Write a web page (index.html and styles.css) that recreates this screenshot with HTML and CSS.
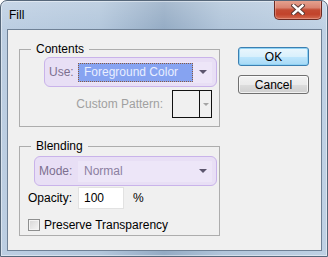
FILE: index.html
```html
<!doctype html>
<html lang="en">
<head>
	<meta charset="utf-8">
	<title>Fill</title>
	<link rel="stylesheet" href="styles.css">
</head>
<body>

	<div class="window">
		<div class="titlebar">
			<span class="title">Fill</span>
			<button class="close" aria-label="Close">
				<svg width="14" height="11" viewBox="0 0 14 11">
					<path d="M2.5 1.5 L11.5 9.5 M11.5 1.5 L2.5 9.5" stroke="#5b3a36" stroke-width="4.4" stroke-linecap="square" fill="none"/>
					<path d="M2.5 1.5 L11.5 9.5 M11.5 1.5 L2.5 9.5" stroke="#ffffff" stroke-width="2.4" stroke-linecap="square" fill="none"/>
				</svg>
			</button>
		</div>

		<div class="client">
			<div class="groups">
				<fieldset class="group group-contents">
					<legend>Contents</legend>
					<div class="hl hl-use">
						<span class="hl-label">Use:</span>
						<div class="select">
							<span class="select-value is-selected">Foreground Color</span>
							<span class="select-arrow"></span>
						</div>
					</div>
					<div class="pattern-row">
						<span class="disabled">Custom Pattern:</span>
						<div class="pattern-box">
							<span class="pattern-swatch"></span>
							<span class="pattern-arrow"></span>
						</div>
					</div>
				</fieldset>

				<fieldset class="group group-blending">
					<legend>Blending</legend>
					<div class="hl hl-mode">
						<span class="hl-label">Mode:</span>
						<div class="select">
							<span class="select-value">Normal</span>
							<span class="select-arrow"></span>
						</div>
					</div>
					<div class="opacity-row">
						<span class="row-label">Opacity:</span>
						<input class="field" type="text" value="100">
						<span class="unit">%</span>
					</div>
					<label class="check-row">
						<span class="checkbox"></span>
						<span>Preserve Transparency</span>
					</label>
				</fieldset>
			</div>

			<div class="buttons">
				<button class="btn btn-default">OK</button>
				<button class="btn">Cancel</button>
			</div>
		</div>
	</div>

</body>
</html>
```

FILE: styles.css
```css
html, body {
	margin: 0;
	padding: 0;
}
body {
	font-family: "Liberation Sans", Arial, sans-serif;
	font-size: 12px;
	line-height: 14px;
	color: #000;
	background: #fff;
}

/*****/

.window {
	box-sizing: border-box;
	width: 328px;
	height: 257px;
	display: flex;
	flex-direction: column;
	border: 1px solid #56677a;
	border-radius: 7px 7px 0 0;
	background:
		linear-gradient(rgba(255, 255, 255, 0.18), rgba(255, 255, 255, 0) 30px),
		linear-gradient(90deg, #bccee2 0%, #b3c7dc 30%, #94abc4 50%, #b1c5da 68%, #bfd1e4 100%);
	box-shadow: inset 0 0 0 1px rgba(255, 255, 255, 0.45);
	overflow: hidden;
}
.titlebar {
	height: 28px;
	display: flex;
	align-items: center;
	padding-left: 8px;
	flex-shrink: 0;
}
.title {
	color: #000;
}
.close {
	box-sizing: border-box;
	margin: -1px 5px 0 auto;
	align-self: flex-start;
	width: 48px;
	height: 20px;
	padding: 0;
	border: 1px solid #6b2a22;
	border-top: 0;
	border-radius: 0 0 5px 5px;
	background: linear-gradient(#e6a593 0%, #d98471 40%, #c34b33 52%, #c2432b 75%, #d26a50 100%);
	box-shadow: inset 0 0 0 1px rgba(255, 210, 200, 0.35);
	display: flex;
	align-items: center;
	justify-content: center;
}
.close svg {
	display: block;
}

.client {
	flex: 1;
	margin: 0 5px 5px 6px;
	border: 1px solid #6f8196;
	background: #f0f0f0;
	display: flex;
	padding: 12px 12px 0 11px;
}
.groups {
	width: 201px;
	display: flex;
	flex-direction: column;
	gap: 12px;
}

.group {
	margin: 0;
	padding: 0 0 0 0;
	border: 1px solid #adadad;
	display: flex;
	flex-direction: column;
	min-width: 0;
}
.group legend {
	margin-left: 11px;
	padding: 0 5px;
	line-height: 14px;
}
.group-contents {
	padding-bottom: 8px;
}
.group-blending {
	padding-bottom: 4px;
}

/* highlighted rows */
.hl {
	box-sizing: border-box;
	height: 30px;
	display: flex;
	align-items: center;
	margin-right: 2px;
	padding: 0 4px 0 4px;
	border: 1px solid #c9b3ea;
	border-radius: 6px;
	background: #e8dff5;
}
.hl-use {
	margin-left: 24px;
	margin-top: 1px;
}
.hl-mode {
	margin-left: 14px;
	margin-top: 3px;
}
.hl-label {
	color: #7c6f8f;
}
.select {
	box-sizing: border-box;
	margin-left: auto;
	width: 134px;
	height: 21px;
	padding: 1px 0;
	display: flex;
	align-items: center;
	background: #ede6f8;
}
.select-value {
	box-sizing: border-box;
	width: 115px;
	height: 19px;
	padding-left: 5px;
	line-height: 17px;
	color: #8b80a1;
	border: 1px solid transparent;
}
.select-value.is-selected {
	background: #86a3f1;
	color: #e9eeff;
	border: 1px dotted #8a5a40;
}
.select-arrow {
	margin-left: 6px;
	width: 0;
	height: 0;
	border-left: 4px solid transparent;
	border-right: 4px solid transparent;
	border-top: 4px solid #5c566e;
}

.pattern-row {
	margin-top: 3px;
	display: flex;
	align-items: center;
	justify-content: flex-end;
	gap: 9px;
	padding-right: 7px;
}
.disabled {
	color: #a0a0a0;
}
.pattern-box {
	box-sizing: border-box;
	width: 40px;
	height: 28px;
	border: 1px solid #111;
	display: flex;
}
.pattern-swatch {
	width: 26px;
	border-right: 1px solid #111;
}
.pattern-arrow {
	flex: 1;
	display: flex;
	align-items: center;
	justify-content: center;
}
.pattern-arrow::after {
	content: "";
	border-left: 3px solid transparent;
	border-right: 3px solid transparent;
	border-top: 3px solid #a4a4a4;
}

.opacity-row {
	margin-top: 1px;
	height: 22px;
	display: flex;
	align-items: center;
	padding-left: 8px;
}
.row-label {
	width: 50px;
}
.field {
	box-sizing: border-box;
	width: 46px;
	height: 22px;
	margin: 0;
	padding: 0 0 0 5px;
	border: 1px solid #e2e2e2;
	background: #fff;
	font: inherit;
	color: #000;
	outline: none;
}
.unit {
	margin-left: 9px;
}

.check-row {
	margin-top: 9px;
	height: 13px;
	display: flex;
	align-items: center;
	gap: 4px;
	padding-left: 8px;
}
.checkbox {
	box-sizing: border-box;
	width: 12px;
	height: 12px;
	border: 1px solid #8e8f8f;
	background: linear-gradient(135deg, #d6d6d6, #f6f6f6);
	box-shadow: inset 0 0 0 1px #f4f4f4;
}

.buttons {
	margin-left: 18px;
	width: 71px;
	display: flex;
	flex-direction: column;
	gap: 9px;
	padding-top: 5px;
}
.btn {
	box-sizing: border-box;
	height: 19px;
	margin: 0;
	padding: 0;
	font: inherit;
	line-height: 16px;
	color: #000;
	border: 1px solid #707070;
	border-radius: 3px;
	background: linear-gradient(#f2f2f2 0%, #ebebeb 50%, #dddddd 51%, #cfcfcf 100%);
	box-shadow: inset 0 0 0 1px rgba(255, 255, 255, 0.7);
}
.btn-default {
	border-color: #3c7fb1;
	background: linear-gradient(#eaf6fd 0%, #d9f0fc 50%, #bee6fd 51%, #a7d9f5 100%);
	box-shadow: inset 0 0 0 1px #8fd2f4;
}
```
